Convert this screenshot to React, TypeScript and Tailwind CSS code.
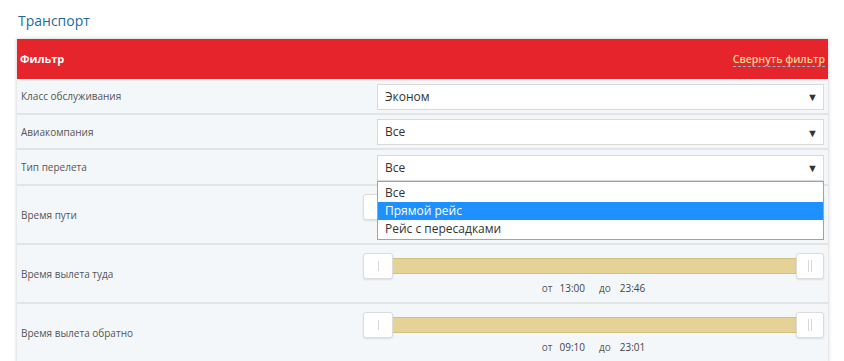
import React from 'react';

const font = { fontFamily: '"Open Sans", "Liberation Sans", sans-serif' };

function SelectBox({ value }: { value: string }) {
  return (
    <div className="ml-[14px] flex h-[26px] flex-1 items-center justify-between border border-[#d9d9d9] bg-white pl-[7px] pr-[5px] text-[12px] text-[#333]">
      <span>{value}</span>
      <span className="text-[11px] leading-none text-[#333]">▼</span>
    </div>
  );
}

function Slider({ from, to }: { from: string; to: string }) {
  return (
    <div className="flex flex-1 flex-col">
      <div className="flex h-[26px] items-center">
        <div className="flex h-[26px] w-[30px] shrink-0 items-center justify-center rounded-[3px] border border-[#dcdcdc] bg-white shadow-[0_1px_2px_rgba(0,0,0,0.1)]">
          <div className="h-[10px] w-px bg-[#d8d8d8]" />
        </div>
        <div className="h-[16px] flex-1 border-y border-[#d3c07f] bg-[#e5d297]" />
        <div className="flex h-[26px] w-[28px] shrink-0 items-center justify-center gap-[2px] rounded-[3px] border border-[#dcdcdc] bg-white shadow-[0_1px_2px_rgba(0,0,0,0.1)]">
          <div className="h-[12px] w-px bg-[#d8d8d8]" />
          <div className="h-[12px] w-px bg-[#d8d8d8]" />
        </div>
      </div>
      <div className="mt-[2px] flex justify-center text-[10px] text-[#555]">
        <span>от</span>
        <span className="ml-[7px] text-[#444]">{from}</span>
        <span className="ml-[14px]">до</span>
        <span className="ml-[9px] text-[#444]">{to}</span>
      </div>
    </div>
  );
}

function Row({
  label,
  children,
  tall,
  h = 'h-[36px]',
}: {
  label: string;
  children: React.ReactNode;
  tall?: boolean;
  h?: string;
}) {
  return (
    <div
      className={
        'flex border-b-2 border-[#e2e4e6] pr-[4px] ' +
        (tall ? 'h-[59px] items-start pt-[8px]' : h + ' items-center pt-[1px]')
      }
    >
      <div
        className={
          'w-[346px] shrink-0 pl-[4px] text-[10px] text-[#555] ' + (tall ? 'pt-[14px]' : '')
        }
      >
        {label}
      </div>
      <div className="flex flex-1">{children}</div>
    </div>
  );
}

export default function App() {
  return (
    <div className="h-[361px] overflow-hidden bg-white px-[17px] pr-[16px]" style={font}>
      <div className="pt-[11px] pb-[9px] pl-px text-[14px] leading-[19px] text-[#1c6b9b]">Транспорт</div>

      <div className="bg-[#f4f7fa] shadow-[0_0_4px_rgba(0,0,0,0.22)]">
        {/* header */}
        <div className="flex h-[40px] items-center justify-between bg-[#e5242b] pl-[3px] pr-[3px]">
          <span className="text-[11px] font-bold text-white">Фильтр</span>
          <span className="border-b border-dashed border-[#8fb3c4] text-[10.5px] font-semibold leading-[14px] text-[#f9d48e]">
            Свернуть фильтр
          </span>
        </div>

        <Row label="Класс обслуживания">
          <SelectBox value="Эконом" />
        </Row>
        <Row label="Авиакомпания" h="h-[35px]">
          <SelectBox value="Все" />
        </Row>
        <div className="relative">
          <Row label="Тип перелета">
            <SelectBox value="Все" />
          </Row>
          {/* open dropdown */}
          <div className="absolute top-[31px] left-[360px] right-[4px] z-10 border border-[#8aa7c9] bg-white text-[12px] leading-[18px] text-[#333]">
            <div className="px-[7px] pt-[2px]">Все</div>
            <div className="bg-[#1e90ff] px-[7px] text-white">Прямой рейс</div>
            <div className="px-[7px] pb-px">Рейс с пересадками</div>
          </div>
        </div>
        <Row label="Время пути" tall>
          <Slider from="01:20" to="23:55" />
        </Row>
        <Row label="Время вылета туда" tall>
          <Slider from="13:00" to="23:46" />
        </Row>
        <Row label="Время вылета обратно" tall>
          <Slider from="09:10" to="23:01" />
        </Row>
      </div>
    </div>
  );
}
